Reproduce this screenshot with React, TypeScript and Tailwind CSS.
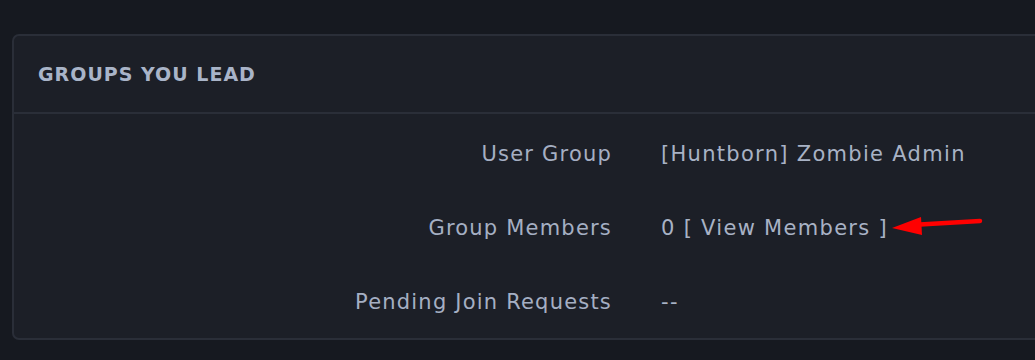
const rows = [
  { label: "User Group", value: "[Huntborn] Zombie Admin" },
  { label: "Group Members", value: "members" },
  { label: "Pending Join Requests", value: "--" },
];

const App = () => {
  return (
    <div
      className="w-[1035px] h-[360px] overflow-hidden bg-[#161920] pt-[34px] pl-[12px]"
      style={{ fontFamily: '"DejaVu Sans", "Open Sans", sans-serif' }}
    >
      {/* card runs off the right edge */}
      <div className="w-[1100px] h-[306px] bg-[#1c1f27] border-2 border-[#2a2e38] rounded-[7px]">
        <div className="h-[78px] flex items-center pl-[24px] border-b-2 border-[#2a2e38]">
          <h2 className="text-[19px] font-bold tracking-[1px] text-[#a9b4c8] uppercase">Groups You Lead</h2>
        </div>

        <div className="pt-[4px]">
          {rows.map((row, i) => (
            <div key={i} className="h-[74px] flex items-center text-[21px] text-[#a5afc3]">
              <div className="w-[598px] text-right tracking-[1.2px]">{row.label}</div>
              <div className="pl-[49px] relative tracking-[1.3px] text-[#a8b2c5]">
                {row.value === "members" ? (
                  <span className="relative">
                    0 [ View Members ]
                    <svg
                      className="absolute left-[100%] top-[-5px]"
                      width="100"
                      height="30"
                      viewBox="0 0 100 30"
                    >
                      <path d="M32 13.5 L92 10" stroke="#ff0000" strokeWidth="4.5" strokeLinecap="round" fill="none" />
                      <path d="M4 17 L33 6 L34 24 Z" fill="#ff0000" />
                    </svg>
                  </span>
                ) : (
                  row.value
                )}
              </div>
            </div>
          ))}
        </div>
      </div>
    </div>
  );
};

export default App;
